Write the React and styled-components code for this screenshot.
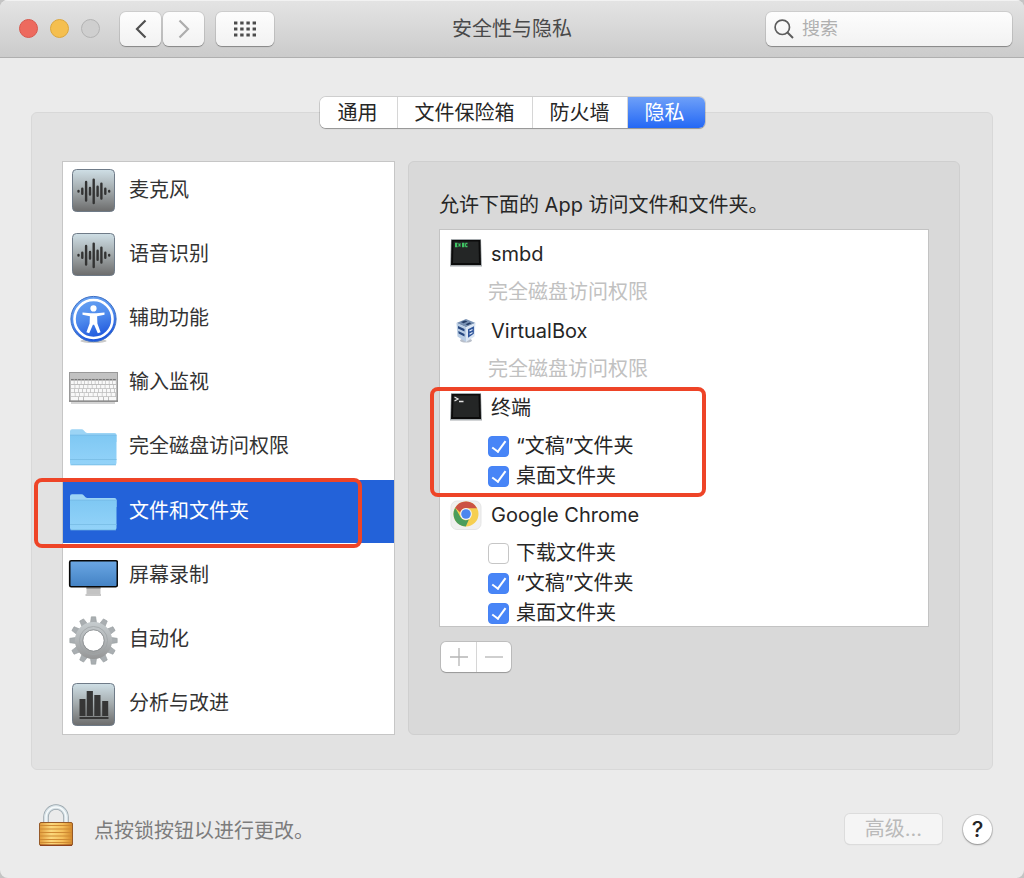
import {useState} from "react";
import {createGlobalStyle, styled} from "styled-components";

const WaveIcon = () => (
    <svg width="50" height="50" viewBox="0 0 50 50">
        <defs>
            <linearGradient id="tile" x1="0" y1="0" x2="0" y2="1">
                <stop offset="0" stopColor="#cfdfe6"/>
                <stop offset="0.5" stopColor="#a2a9ab"/>
                <stop offset="1" stopColor="#6c6c6c"/>
            </linearGradient>
        </defs>
        <rect x="4.5" y="3.5" width="42" height="42" rx="4" fill="url(#tile)" stroke="#6f7b88"/>
        <g stroke="#333" strokeWidth="2.4" strokeLinecap="round">
            <path d="M10.5 25v.6M14.3 22.8v5M18.1 16v18.5M22 22v6.5M25.7 13.6v23.4M29.6 20.8v9M33.4 17.6v15M37.3 22.8v5M41.2 25v.6"/>
        </g>
    </svg>
)

const AccessIcon = () => (
    <svg width="50" height="50" viewBox="0 -1 50 50">
        <defs>
            <linearGradient id="access" x1="0" y1="0" x2="0.3" y2="1">
                <stop offset="0" stopColor="#6ea8f3"/>
                <stop offset="0.55" stopColor="#4f8bed"/>
                <stop offset="1" stopColor="#2058dd"/>
            </linearGradient>
        </defs>
        <ellipse cx="25.5" cy="46" rx="13" ry="2" fill="#c9c9c9"/>
        <circle cx="25.5" cy="24" r="22.6" fill="url(#access)" stroke="#3d6fc4"/>
        <circle cx="25.5" cy="24" r="19" fill="none" stroke="#fff" strokeWidth="2.6"/>
        <circle cx="25.5" cy="13.4" r="3.1" fill="#fff"/>
        <path d="M14.500 17.600l8.400.7h5.200l8.400-.7v2.200l-7.400 1.500.3 7.200 3.200 8.800-2.800.9-3.700-8.500h-1.200l-3.700 8.500-2.800-.9 3.200-8.800.3-7.200-7.400-1.500z" fill="#fff"/>
    </svg>
)

const KeyboardIcon = () => (
    <svg width="50" height="50" viewBox="0 -4 50 50">
        <path d="M3 39.5h44v2.5H3z" fill="#d4d4d4"/>
        <rect x="1.5" y="10.500" width="48" height="28.500" fill="#bdbdbd" stroke="#999"/>
        <path d="M1 39.2h49" stroke="#777"/>
        <rect x="2" y="11" width="47" height="5.500" fill="#c2c2c2"/>
        <g stroke="#f8f8f8" strokeWidth="3.200">
            <path d="M3 20.500h45" strokeDasharray="2.8 .7"/>
            <path d="M3 24.700h45" strokeDasharray="3.6 .7"/>
            <path d="M3 28.700h45" strokeDasharray="3.2 .8"/>
            <path d="M3 32.700h45" strokeDasharray="3.8 .7"/>
            <path d="M3 36.700h7M11 36.700h4M16 36.700h14M31 36.700h4M36 36.700h4M41 36.700h7"/>
        </g>
        <path d="M3 17.500h45" stroke="#777" strokeDasharray="2.8 .7"/>
    </svg>
)

const FolderIcon = () => (
    <svg width="50" height="50" viewBox="0 0 50 50">
        <defs>
            <linearGradient id="folder" x1="0" y1="0" x2="0" y2="1">
                <stop offset="0" stopColor="#7fc8f3"/>
                <stop offset="1" stopColor="#93d3f9"/>
            </linearGradient>
        </defs>
        <path d="M2 9.2q0-2 2-2h9.500q1.500 0 2.400 1.200l1.600 1.800q.8.800 2 .8H46.500q2 0 2 2V20H2z" fill="#9cd4f5"/>
        <path d="M2 13.200h46.500V41q0 2-2 2H4q-2 0-2-2z" fill="url(#folder)"/>
        <path d="M2 13.200h46.500" stroke="#74bce8"/>
        <path d="M2 37.500h46.500M2.500 42.800h45.500" stroke="#7cc0e8"/>
    </svg>
)

const ScreenIcon = () => (
    <svg width="50" height="50" viewBox="0 1 50 50">
        <defs>
            <linearGradient id="screen" x1="0" y1="0" x2="0" y2="1">
                <stop offset="0" stopColor="#6ba7e4"/>
                <stop offset="1" stopColor="#4382c4"/>
            </linearGradient>
        </defs>
        <path d="M18.500 37h14v7h-14z" fill="#c3c3c3"/>
        <path d="M17.500 45h15.500" stroke="#b5b5b5" strokeWidth="1.500"/>
        <path d="M18.500 38h14" stroke="#999" strokeWidth="2"/>
        <rect x="1.700" y="10.700" width="47.600" height="26" rx="1.500" fill="url(#screen)" stroke="#080808" strokeWidth="1.600"/>
    </svg>
)

const TEETH = [0, 30, 60, 90, 120, 150, 180, 210, 240, 270, 300, 330];

const GearIcon = () => (
    <svg width="50" height="50" viewBox="0 0 50 50">
        <defs>
            <linearGradient id="gear" gradientUnits="userSpaceOnUse" x1="25" y1="0" x2="25" y2="50">
                <stop offset="0" stopColor="#cdd4d7"/>
                <stop offset="0.5" stopColor="#b2b6b8"/>
                <stop offset="1" stopColor="#8b8b8b"/>
            </linearGradient>
        </defs>
        <g fill="#a9aeb1" stroke="#979da0" strokeWidth=".6">
            {TEETH.map((deg) => (
                <path key={deg} d="M22.300 9l1-7.200h4.400l1 7.200z" transform={`rotate(${deg} 25.500 25.500)`}/>
            ))}
        </g>
        <circle cx="25.500" cy="25.500" r="14.500" fill="none" stroke="url(#gear)" strokeWidth="8.200"/>
        <circle cx="25.500" cy="25.500" r="14" fill="none" stroke="#a0a4a7" strokeWidth=".8"/>
        <circle cx="25.500" cy="25.500" r="10.700" fill="none" stroke="#85898b" strokeWidth=".8"/>
    </svg>
)

const ChartIcon = () => (
    <svg width="50" height="50" viewBox="0 -1 50 50">
        <rect x="4.500" y="3.500" width="42" height="42" rx="4" fill="url(#tile)" stroke="#6f7b88"/>
        <path d="M11.500 19h6v17h-6zM18.700 11h6.200v25h-6.200zM26.300 15h6.200v21h-6.200zM34.200 21h6v15h-6zM11.500 37h29v2h-29z" fill="#363636"/>
    </svg>
)

const TerminalIcon = ({exec}) => (
    <svg width="32" height="30" viewBox="0 2 32 30">
        <path d="M1 2h30l1 27.500H0z" fill="#a5aaad"/>
        <path d="M1.500 3h29l.5 25H1z" fill="#0b0b0b"/>
        <path d="M3.500 4.500h25l.5 21.500H3z" fill="#242626"/>
        {exec
            ? <path d="M5 6.500h2.500M5 8h2M5 9.500h2.500M8.500 6.500l2 3M10.500 6.500l-2 3M12 6.500h2.300M12 8h2M12 9.500h2.300M15.500 6.500h2M15.300 6.500v3M15.500 9.500h2" stroke="#3fc463" strokeWidth="1.300"/>
            : <path d="M4.500 6l3.500 2-3.500 2M9 10.500h4.500" fill="none" stroke="#e3e3e3" strokeWidth="1.300"/>}
    </svg>
)

const VirtualBoxIcon = () => (
    <svg width="32" height="30" viewBox="0 0 32 30">
        <ellipse cx="16" cy="24.500" rx="6" ry="2" fill="#b9bfca"/>
        <path d="M16 3l9.500 4-9.500 4.300L6.500 7z" fill="#7891b3"/>
        <path d="M6.500 7l9.500 4.300V26l-8.500-5.500z" fill="#b9cde4"/>
        <path d="M25.500 7L16 11.300V26l8.500-5.500z" fill="#dbe6f3"/>
        <path d="M8 10l6.500 3v2.500L8 12.600zM8.300 15l6.200 3v2.600l-5.900-3.200z" fill="#27477f"/>
        <path d="M18 13.200l6-2.900-.2 7.500-5.800 4z" fill="#2f559b"/>
        <path d="M19.500 15l3-1.500M19.500 18.200l3-1.700" fill="none" stroke="#e8effa" strokeWidth="1.100"/>
        <path d="M11 6l4-1.500 2.500 1-4 1.800zM15.500 8.300l4-1.800 2 .8-4 1.900z" fill="#263e66"/>
    </svg>
)

const ChromeIcon = () => (
    <svg width="32" height="30" viewBox="0 0 32 30">
        <rect x="1" y="1" width="30" height="28.500" rx="6" fill="#f0f0f0" stroke="#e5e5e5"/>
        <circle cx="16" cy="14" r="12.500" fill="#f6cf50"/>
        <path d="M5.200 7.700l5.400 9.500a6 6 0 0 0 8.400 2.100L15.800 26.500A12.500 12.500 0 0 1 5.200 7.700z" fill="#4b9d5c"/>
        <path d="M5.200 7.700A12.500 12.500 0 0 1 27 8.200H16a6 6 0 0 0-5.700 4.300z" fill="#cb5344"/>
        <circle cx="16" cy="14" r="5.900" fill="#f7f7f7"/>
        <circle cx="16" cy="14" r="4.800" fill="#4c86ee"/>
    </svg>
)

const LockIcon = () => (
    <svg width="36" height="44" viewBox="0 0 36 44">
        <defs>
            <linearGradient id="lock" x1="0" y1="0" x2="1" y2="0">
                <stop offset="0" stopColor="#e09a3a"/>
                <stop offset="0.35" stopColor="#fcd87c"/>
                <stop offset="0.7" stopColor="#f5bf5b"/>
                <stop offset="1" stopColor="#d38729"/>
            </linearGradient>
        </defs>
        <path d="M8 20V13a10 10 0 0 1 20 0V20" fill="none" stroke="#98a3aa" strokeWidth="5.500"/>
        <path d="M8 20V13a10 10 0 0 1 20 0V20" fill="none" stroke="#d5e0e5" strokeWidth="4"/>
        <path d="M8 20V13a10 10 0 0 1 20 0V20" fill="none" stroke="#f6fafb" strokeWidth="1.500"/>
        <rect x="1.500" y="18.500" width="33" height="23" rx="1.500" fill="url(#lock)" stroke="#965a28"/>
        <path d="M2 21.500h32M2 25h32M2 28.500h32M2 32h32M2 35.500h32M2 38.500h32" stroke="#cf8a33"/>
        <path d="M2 41.300h32" stroke="#8e421d" strokeWidth="1.500"/>
    </svg>
)

const TABS = ["通用", "文件保险箱", "防火墙", "隐私"];

const CATEGORIES = [
    {name: "麦克风", icon: <WaveIcon/>},
    {name: "语音识别", icon: <WaveIcon/>},
    {name: "辅助功能", icon: <AccessIcon/>},
    {name: "输入监视", icon: <KeyboardIcon/>},
    {name: "完全磁盘访问权限", icon: <FolderIcon/>},
    {name: "文件和文件夹", icon: <FolderIcon/>},
    {name: "屏幕录制", icon: <ScreenIcon/>},
    {name: "自动化", icon: <GearIcon/>},
    {name: "分析与改进", icon: <ChartIcon/>},
];

const APPS = [
    {name: "smbd", icon: <TerminalIcon exec/>, note: "完全磁盘访问权限"},
    {name: "VirtualBox", icon: <VirtualBoxIcon/>, note: "完全磁盘访问权限"},
    {
        name: "终端", icon: <TerminalIcon/>, folders: [
            {name: "“文稿”文件夹", checked: true},
            {name: "桌面文件夹", checked: true},
        ]
    },
    {
        name: "Google Chrome", icon: <ChromeIcon/>, folders: [
            {name: "下载文件夹", checked: false},
            {name: "“文稿”文件夹", checked: true},
            {name: "桌面文件夹", checked: true},
        ]
    },
];

export default function App() {
    const [tab, setTab] = useState("隐私");
    const [category, setCategory] = useState("文件和文件夹");

    return (
        <>
            <GlobalStyle/>
            <Window>
                <TitleBar>
                    <Controls>
                        <Lights>
                            <Light $color="#ed6a5e" $edge="#d8584d" aria-label="关闭"/>
                            <Light $color="#f5bf4f" $edge="#dca73c" aria-label="最小化"/>
                            <Light $color="#cfcfcf" $edge="#b3b3b3" aria-label="缩放" disabled/>
                        </Lights>
                        <NavGroup>
                            <BarButton aria-label="后退">
                                <svg width="12" height="20" viewBox="0 0 12 20" fill="none" stroke="#505050" strokeWidth="2.200">
                                    <path d="M10.500 1.500L2 10l8.500 8.500"/>
                                </svg>
                            </BarButton>
                            <BarButton aria-label="前进" disabled>
                                <svg width="12" height="20" viewBox="0 0 12 20" fill="none" stroke="#adadad" strokeWidth="2.200">
                                    <path d="M1.500 1.500L10 10l-8.500 8.500"/>
                                </svg>
                            </BarButton>
                        </NavGroup>
                        <BarButton $wide aria-label="显示全部">
                            <svg width="22" height="16" viewBox="0 0 22 16" stroke="#4c4c4c" strokeWidth="3.200">
                                <path d="M0 2h22M0 8h22M0 14h22" strokeDasharray="3.400 2.800"/>
                            </svg>
                        </BarButton>
                    </Controls>
                    <Title>安全性与隐私</Title>
                    <SearchBox>
                        <svg width="20" height="20" viewBox="0 0 20 20" fill="none" stroke="#5c5c5c" strokeWidth="1.700">
                            <circle cx="8.300" cy="8.300" r="7.200"/>
                            <path d="M13.500 13.500l5.500 5.500" strokeWidth="2"/>
                        </svg>
                        <input type="search" placeholder="搜索" aria-label="搜索"/>
                    </SearchBox>
                </TitleBar>

                <Body>
                    <Tabs>
                        {TABS.map((name) => (
                            <Tab key={name} $active={name === tab} onClick={() => setTab(name)}>{name}</Tab>
                        ))}
                    </Tabs>
                    <GroupBox>
                        <Sidebar>
                            <CategoryFrame>
                                <CategoryList>
                                    {CATEGORIES.map((item) => (
                                        <Category
                                            key={item.name}
                                            $selected={item.name === category}
                                            onClick={() => setCategory(item.name)}
                                        >
                                            {item.icon}
                                            <span>{item.name}</span>
                                        </Category>
                                    ))}
                                </CategoryList>
                            </CategoryFrame>
                            <CategoryMark/>
                        </Sidebar>
                        <Panel>
                            <PanelTitle>允许下面的 App 访问文件和文件夹。</PanelTitle>
                            <AppList>
                                {APPS.map((app) => (
                                    <li key={app.name}>
                                        <AppRow>{app.icon}<span>{app.name}</span></AppRow>
                                        {app.note && <Note>{app.note}</Note>}
                                        {app.folders?.map((folder) => (
                                            <FolderRow key={folder.name}>
                                                <CheckBox type="checkbox" defaultChecked={folder.checked}/>
                                                <span>{folder.name}</span>
                                            </FolderRow>
                                        ))}
                                    </li>
                                ))}
                            </AppList>
                            <EditButtons>
                                <button aria-label="添加" disabled>
                                    <svg width="18" height="18" viewBox="0 0 18 18" stroke="#b5b5b5" strokeWidth="1.300">
                                        <path d="M0 9h18M9 0v18"/>
                                    </svg>
                                </button>
                                <button aria-label="移除" disabled>
                                    <svg width="18" height="18" viewBox="0 0 18 18" stroke="#b5b5b5" strokeWidth="1.300">
                                        <path d="M0 9h18"/>
                                    </svg>
                                </button>
                            </EditButtons>
                            <AppMark/>
                        </Panel>
                    </GroupBox>
                </Body>

                <Footer>
                    <LockButton aria-label="锁"><LockIcon/></LockButton>
                    <LockText>点按锁按钮以进行更改。</LockText>
                    <AdvancedButton disabled>高级...</AdvancedButton>
                    <HelpButton aria-label="帮助">?</HelpButton>
                </Footer>
            </Window>
        </>
    );
}

const GlobalStyle = createGlobalStyle`
  *, *::after {
    box-sizing: border-box;
  }

  body {
    margin: 0;
    background: #c4c4c4;
    color: #262626;
    font-family: Inter, "Noto Sans CJK SC", sans-serif;
    font-size: 20px;
    line-height: 28px;
  }

  button, input {
    margin: 0;
    padding: 0;
    border: none;
    color: inherit;
    font: inherit;
  }

  svg {
    display: block;
    flex-shrink: 0;
  }
`

const Window = styled.div`
  display: flex;
  flex-direction: column;
  min-height: 100vh;
  overflow: hidden;
  background: #ebebeb;
  border-radius: 8px;
`

const TitleBar = styled.header`
  display: grid;
  grid-template-columns: 1fr auto 1fr;
  align-items: center;
  height: 58px;
  padding: 0 12px;
  background: linear-gradient(#e4e4e4, #cbcbcb);
  border-bottom: 1px solid #afafaf;
  box-shadow: inset 0 1px #f2f2f2;
`

const Controls = styled.div`
  display: flex;
  align-items: center;
`

const Lights = styled.div`
  display: flex;
  gap: 12px;
  margin: 0 20px 0 7px;
`

const Light = styled.button`
  width: 19px;
  height: 19px;
  border: 1px solid ${(props) => props.$edge};
  border-radius: 50%;
  background: ${(props) => props.$color};
`

const NavGroup = styled.div`
  display: flex;
  gap: 2px;
  margin-right: 12px;
`

const BarButton = styled.button`
  display: flex;
  align-items: center;
  justify-content: center;
  width: ${(props) => props.$wide ? "58px" : "41px"};
  height: 34px;
  border-radius: 6px;
  background: linear-gradient(#fdfdfd, #f2f2f2);
  box-shadow: 0 0 0 1px rgba(0, 0, 0, 0.08), 0 1px 1px rgba(0, 0, 0, 0.3);
`

const Title = styled.h1`
  margin: 0;
  color: #4a4a4a;
  font-size: 20px;
  font-weight: 400;
`

const SearchBox = styled.label`
  display: flex;
  align-items: center;
  justify-self: end;
  gap: 8px;
  width: 246px;
  height: 34px;
  padding: 0 8px;
  border-radius: 6px;
  background: linear-gradient(#fdfdfd, #f2f2f2);
  box-shadow: 0 0 0 1px rgba(0, 0, 0, 0.08), 0 1px 1px rgba(0, 0, 0, 0.3);

  > input {
    flex: 1;
    min-width: 0;
    background: none;
    outline: none;
    font-size: 18px;
  }

  > input::placeholder {
    color: #b0b0b0;
  }
`

const Body = styled.main`
  display: flex;
  flex-direction: column;
  align-items: center;
  padding: 39px 31px 0;
`

const Tabs = styled.div`
  display: flex;
  z-index: 1;
  margin-bottom: -16px;
  border-radius: 6px;
  background: #fff;
  box-shadow: 0 0 0 1px rgba(0, 0, 0, 0.12), 0 1px 1px rgba(0, 0, 0, 0.25);
`

const Tab = styled.button`
  height: 31px;
  padding: 0 17px;
  border-right: 1px solid #d6d6d6;
  background: ${(props) => props.$active ? "linear-gradient(#6ea0f8, #2468f5)" : "#fff"};
  color: ${(props) => props.$active ? "#fff" : "#262626"};

  &:first-child {
    padding: 0 19px 0 18px;
    border-radius: 6px 0 0 6px;
  }

  &:last-child {
    padding-right: 20px;
    border-right: none;
    border-radius: 0 6px 6px 0;
  }
`

const GroupBox = styled.section`
  display: flex;
  gap: 13px;
  width: 100%;
  padding: 48px 32px 34px 30px;
  border: 1px solid #d8d8d8;
  border-radius: 6px;
  background: #e2e2e2;
`

const Sidebar = styled.nav`
  position: relative;
  flex: 0 0 333px;
`

const CategoryFrame = styled.div`
  height: 574px;
  overflow: hidden;
  border: 1px solid #c6c6c6;
  background: #fff;
`

// scrolled slightly, so the first and last rows are cut by the frame
const CategoryList = styled.div`
  display: grid;
  grid-template-rows: repeat(9, 1fr);
  height: 578px;
  margin-top: -3px;
`

const Category = styled.button`
  display: flex;
  align-items: center;
  gap: 11px;
  padding: 0 5px;
  border-bottom: 1px solid #fff;
  background: ${(props) => props.$selected ? "#2362d9" : "#fff"};
  background-clip: padding-box;
  color: ${(props) => props.$selected ? "#fff" : "#333"};
  text-align: left;

  > span {
    padding-bottom: 2px;
  }
`

const Mark = styled.div`
  position: absolute;
  border: 4px solid #ee4427;
  border-radius: 8px;
  pointer-events: none;
`

const CategoryMark = styled(Mark)`
  top: 317px;
  left: -28px;
  width: 328px;
  height: 70px;
`

const AppMark = styled(Mark)`
  top: 225px;
  left: 21px;
  width: 276px;
  height: 110px;
`

const Panel = styled.div`
  position: relative;
  flex: 1;
  min-width: 0;
  padding: 29px 30px;
  border: 1px solid #cfcfcf;
  border-radius: 6px;
  background: #d9d9d9;
`

const PanelTitle = styled.h2`
  margin: 0 0 10px;
  font-size: 20px;
  font-weight: 400;
`

const AppList = styled.ul`
  height: 398px;
  margin: 0 0 15px;
  padding: 0;
  overflow: hidden;
  border: 1px solid #c3c3c3;
  background: #fff;
  list-style: none;
`

const AppRow = styled.div`
  display: flex;
  align-items: center;
  gap: 9px;
  height: 47px;
  padding-left: 10px;
`

const Note = styled.div`
  height: 30px;
  padding-left: 48px;
  color: #c1c1c1;
  line-height: 30px;
`

const FolderRow = styled.label`
  display: flex;
  align-items: center;
  gap: 7px;
  height: 30px;
  padding-left: 48px;
`

const CheckBox = styled.input`
  appearance: none;
  width: 21px;
  height: 21px;
  border: 1px solid #c6c6c6;
  border-radius: 4px;
  background: #fff;

  &:checked {
    border-color: #4683f5;
    background: #4885f7;
  }

  &:checked::after {
    content: "";
    display: block;
    width: 8px;
    height: 14px;
    margin: 1px 0 0 6px;
    border: solid #fff;
    border-width: 0 2px 2px 0;
    transform: rotate(36deg);
  }
`

const EditButtons = styled.div`
  display: inline-flex;
  margin-left: 2px;
  border-radius: 5px;
  background: #fff;
  box-shadow: 0 0 0 1px rgba(0, 0, 0, 0.12), 0 1px 1px rgba(0, 0, 0, 0.2);

  > button {
    display: flex;
    align-items: center;
    justify-content: center;
    width: 35px;
    height: 30px;
    background: none;
  }

  > button + button {
    border-left: 1px solid #d6d6d6;
  }
`

const Footer = styled.footer`
  display: flex;
  align-items: center;
  padding: 34px 32px 24px 38px;
`

const LockButton = styled.button`
  margin: 0 20px 6px 0;
  background: none;
`

const LockText = styled.p`
  flex: 1;
  margin: 0;
  padding-top: 4px;
  color: #7c7c7c;
`

const AdvancedButton = styled.button`
  width: 97px;
  height: 30px;
  margin-right: 21px;
  border-radius: 5px;
  background: #f5f5f5;
  box-shadow: 0 0 0 1px #dcdcdc, 0 1px 1px #c8c8c8;
  color: #bababa;
`

const HelpButton = styled.button`
  width: 29px;
  height: 29px;
  border-radius: 50%;
  background: #fff;
  box-shadow: 0 0 0 1px rgba(0, 0, 0, 0.12), 0 1px 2px rgba(0, 0, 0, 0.3);
  font-size: 22px;
  font-weight: 500;
`
